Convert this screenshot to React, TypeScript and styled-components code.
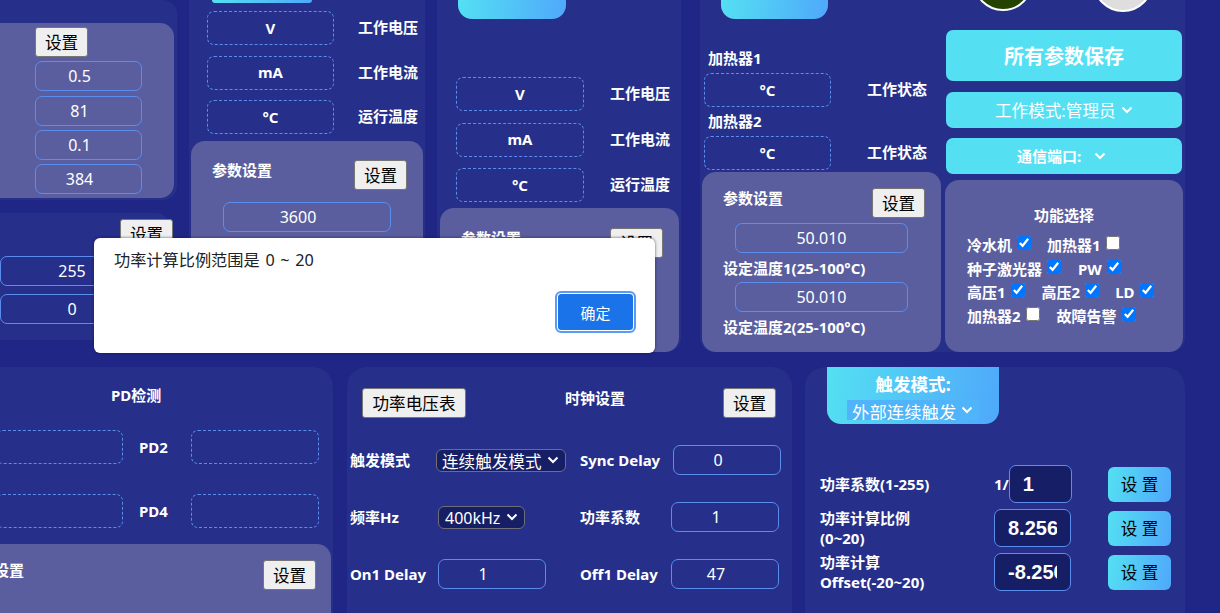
import React from 'react';
import styled, { createGlobalStyle, css } from 'styled-components';

const colors = {
  page: '#1f2685',
  panel: '#262f89',
  card: '#5a5e9e',
  line: '#5b8def',
  cyan: '#54e0f2',
  field: '#161e66',
};

const gradient = 'linear-gradient(100deg, #54e0f2 0%, #4fa8fb 100%)';

const chevron =
  "url(\"data:image/svg+xml,%3Csvg xmlns='http://www.w3.org/2000/svg' width='12' height='8' viewBox='0 0 12 8'%3E%3Cpath d='M1.5 1.5 6 6l4.5-4.5' fill='none' stroke='white' stroke-width='2'/%3E%3C/svg%3E\")";

const selectBase = css`
  appearance: none;
  color: #fff;
  outline: none;
  background-image: ${chevron};
  background-repeat: no-repeat;
  background-position: right 6px center;
`;

const GlobalStyle = createGlobalStyle`
  html, body {
    margin: 0;
    background: ${colors.page};
    overflow: hidden;
  }
  * {
    box-sizing: border-box;
  }
  body, button, input, select {
    font-family: "Noto Sans", "Noto Sans CJK SC", sans-serif;
  }
`;

const Page = styled.div`
  width: 1220px;
  height: 613px;
  overflow: hidden;
  position: relative;
  color: #fff;
`;

const TopRow = styled.div`
  display: grid;
  grid-template-columns: 177px 236px 244px 492px;
  column-gap: 12px;
  height: 352px;
`;

const BottomRow = styled.div`
  display: grid;
  grid-template-columns: 333px 445px 379px;
  column-gap: 14px;
  margin-top: 15px;
  height: 270px;
`;

const Stack = styled.div`
  display: flex;
  flex-direction: column;
`;

const Panel = styled.section<{ $ml?: number }>`
  display: flex;
  flex-direction: column;
  background: ${colors.panel};
  border-radius: 20px;
  margin-left: ${(p) => p.$ml ?? 0}px;
  min-width: 0;
`;

const TopPanel = styled(Panel)`
  border-radius: 0 0 14px 14px;
`;

const EdgePanel = styled(Panel)`
  border-radius: 0 20px 0 0;
`;

const SidePanel = styled.section`
  background: ${colors.panel};
  height: 200px;
  border-radius: 0 14px 14px 0;
  padding: 23px 3px 0 0;
`;

const LowerSidePanel = styled.section`
  display: flex;
  flex-direction: column;
  align-items: flex-start;
  gap: 7px;
  width: 170px;
  height: 127px;
  margin-top: 13px;
  padding-top: 6px;
  background: ${colors.panel};
  border-radius: 0 14px 14px 0;
`;

const SideCard = styled.div`
  display: flex;
  flex-direction: column;
  align-items: flex-start;
  gap: 4.3px;
  height: 175px;
  padding: 4px 0 0 35px;
  background: ${colors.card};
  border-radius: 0 14px 14px 0;
`;

const Card = styled.div<{ $mt?: number; $h: number; $ml?: number }>`
  height: ${(p) => p.$h}px;
  margin: ${(p) => p.$mt ?? 0}px 2px 0 ${(p) => p.$ml ?? 2}px;
  background: ${colors.card};
  border-radius: 14px;
`;

const CardHead = styled.div<{ $pt: number }>`
  display: flex;
  justify-content: space-between;
  align-items: flex-start;
  padding: ${(p) => p.$pt}px 16px 0 21px;
`;

const Label = styled.span`
  font-size: 15px;
  font-weight: 700;
  line-height: 21px;
  white-space: nowrap;
`;

const CutLabel = styled(Label)`
  margin-left: -57px;
`;

const SetButton = styled.button<{ $ml?: number }>`
  width: 53px;
  height: 30px;
  padding: 0;
  flex: none;
  font-size: 16.6px;
  color: #000;
  background: #efefef;
  border: 1px solid #767676;
  border-radius: 3px;
  margin-left: ${(p) => p.$ml ?? 0}px;
`;

const WideButton = styled(SetButton)`
  width: 104px;
`;

// most fields in the source keep their text left of centre
const ValueInput = styled.input<{ $w: number; $ml?: number; $mt?: number; $centered?: boolean }>`
  display: block;
  flex: none;
  width: ${(p) => p.$w}px;
  height: 30px;
  margin: ${(p) => p.$mt ?? 0}px 0 0 ${(p) => p.$ml ?? 0}px;
  padding: 0 ${(p) => (p.$centered ? 0 : 18)}px 0 0;
  font-size: 16px;
  text-align: center;
  color: #fff;
  background: transparent;
  border: 1px solid ${colors.line};
  border-radius: 7px;
  outline: none;
`;

const Tab = styled.div<{ $w: number; $h: number; $ml: number }>`
  flex: none;
  width: ${(p) => p.$w}px;
  height: ${(p) => p.$h}px;
  margin-left: ${(p) => p.$ml}px;
  background: ${gradient};
  border-radius: 0 0 14px 14px;
`;

const ReadoutList = styled.div<{ $mt: number; $gap: number; $pl: number }>`
  display: flex;
  flex-direction: column;
  gap: ${(p) => p.$gap}px;
  margin-top: ${(p) => p.$mt}px;
  padding-left: ${(p) => p.$pl}px;
`;

const Readout = styled.div<{ $gap: number }>`
  display: flex;
  align-items: center;
  gap: ${(p) => p.$gap}px;
`;

const ReadoutName = styled(Label)`
  margin-bottom: 1px;
`;

const DashBox = styled.div<{ $w?: number }>`
  display: flex;
  align-items: center;
  justify-content: center;
  flex: none;
  width: ${(p) => p.$w ?? 127}px;
  height: 34px;
  padding-bottom: 1px;
  font-size: 15px;
  font-weight: 700;
  border: 1px dashed ${colors.line};
  border-radius: 7px;
`;

const HeaterColumn = styled.div`
  display: flex;
  flex-direction: column;
  width: 243px;
`;

const HeaterLabel = styled(Label)<{ $mt: number }>`
  display: block;
  margin: ${(p) => p.$mt}px 0 4px 8px;
`;

const HeaterRow = styled.div`
  display: flex;
  align-items: center;
  gap: 36px;
  padding-left: 4px;
`;

const StackedLabel = styled(Label)<{ $mt: number }>`
  display: block;
  margin: ${(p) => p.$mt}px 0 0 21px;
`;

const PanelSplit = styled.div`
  display: grid;
  grid-template-columns: 245px 238px;
  height: 100%;
`;

const ControlColumn = styled.div`
  display: flex;
  flex-direction: column;
`;

const LedRow = styled.div`
  display: flex;
  align-items: flex-end;
  gap: 60px;
  height: 12px;
  padding-left: 28px;
`;

const Led = styled.div<{ $on?: boolean }>`
  flex: none;
  width: 60px;
  height: 60px;
  margin-bottom: ${(p) => (p.$on ? 1 : 0)}px;
  background: ${(p) => (p.$on ? '#244200' : '#dedede')};
  border: 2px solid #fff;
  border-radius: 50%;
`;

const SaveButton = styled.button`
  height: 51px;
  margin: 18px 1px 0;
  padding: 0;
  font-size: 20px;
  font-weight: 700;
  color: #fff;
  background: ${colors.cyan};
  border: none;
  border-radius: 7px;
`;

const DropBar = styled.div<{ $mt: number; $pl: number }>`
  display: flex;
  align-items: center;
  height: 36px;
  margin: ${(p) => p.$mt}px 1px 0;
  padding-left: ${(p) => p.$pl}px;
  background: ${colors.cyan};
  border-radius: 7px;
`;

const BareSelect = styled.select<{ $w: number }>`
  ${selectBase}
  flex: none;
  width: ${(p) => p.$w}px;
  height: 24px;
  padding: 0;
  font-size: 16.6px;
  background-color: transparent;
  background-position: right 0 center;
  border: none;
`;

const FunctionCard = styled.div`
  height: 172px;
  margin-top: 6px;
  padding: 25px 0 0 22px;
  background: ${colors.card};
  border-radius: 14px;
`;

const FunctionTitle = styled(Label)`
  display: block;
  margin: 0 0 8px 67px;
`;

const FunctionRow = styled.div`
  display: flex;
  height: 23.6px;
`;

const FunctionItem = styled.label<{ $ml?: number }>`
  display: flex;
  margin-left: ${(p) => p.$ml ?? 0}px;
  font-size: 15px;
  font-weight: 700;
  line-height: 23px;
`;

const Check = styled.input.attrs({ type: 'checkbox' })`
  width: 14px;
  height: 14px;
  margin: 2px 0 0 5px;
`;

const DetectPanelHead = styled(Label)`
  display: block;
  margin: 18px 0 0 111px;
`;

const DetectRow = styled.div<{ $mt: number }>`
  display: flex;
  align-items: center;
  justify-content: flex-end;
  margin-top: ${(p) => p.$mt}px;
  padding-right: 14px;
`;

const DetectName = styled(Label)`
  flex: none;
  width: 52px;
  margin-left: 16px;
`;

const BottomCard = styled(CardHead)`
  flex: 1;
  margin: 16px 2px 0 0;
  background: ${colors.card};
  border-radius: 0 14px 0 0;
  padding-right: 15px;
`;

const ClockHead = styled.div`
  display: flex;
  align-items: flex-start;
  padding: 21px 16px 0 15px;
`;

const ClockTitle = styled(Label)`
  margin-left: 99px;
  flex: 1;
`;

const ClockGrid = styled.div`
  display: grid;
  grid-template-columns: 88px 142px 91px 108px;
  grid-auto-rows: 30px;
  row-gap: 27px;
  align-items: center;
  margin-top: 27px;
  padding-left: 3px;
`;

const DarkSelect = styled.select<{ $w: number; $ml?: number; $pl: number; $size?: number }>`
  ${selectBase}
  width: ${(p) => p.$w}px;
  height: 23px;
  margin-left: ${(p) => p.$ml ?? 0}px;
  padding: 0 0 0 ${(p) => p.$pl}px;
  font-size: ${(p) => p.$size ?? 16}px;
  background-color: ${colors.field};
  border: 1px solid #6e6e78;
  border-radius: 6px;
`;

const TriggerTab = styled(Tab)`
  display: flex;
  flex-direction: column;
  align-items: center;
`;

const TriggerTitle = styled.div`
  margin-top: 5px;
  font-size: 17.6px;
  font-weight: 700;
  line-height: 25px;
`;

const TriggerSelect = styled(BareSelect)`
  height: 20px;
  margin-top: 3px;
  padding-left: 5px;
  font-size: 17.4px;
  background-color: #4fb4fa;
  background-position: right 6px center;
`;

const PowerGrid = styled.div`
  display: grid;
  grid-template-columns: 174px 78px 63px;
  grid-auto-rows: 38px;
  row-gap: 6px;
  align-items: center;
  margin-top: 41px;
  padding-left: 15px;
`;

const PowerLabel = styled.div`
  font-size: 15px;
  font-weight: 700;
  line-height: 20.5px;
  white-space: nowrap;
`;

const PowerField = styled.div`
  display: flex;
  align-items: center;
  font-size: 15px;
  font-weight: 700;
`;

const PowerInput = styled.input<{ $w: number }>`
  width: ${(p) => p.$w}px;
  height: 38px;
  padding: 0 13px;
  font-family: "Liberation Sans", sans-serif;
  font-size: 20px;
  font-weight: 700;
  color: #fff;
  background: ${colors.field};
  border: 1px solid ${colors.line};
  border-radius: 7px;
  outline: none;
`;

const GradientButton = styled.button`
  width: 63px;
  height: 35px;
  margin-left: 36px;
  padding: 0;
  font-size: 16.6px;
  color: #000;
  background: ${gradient};
  border: none;
  border-radius: 6px;
  white-space: pre;
`;

const Alert = styled.div`
  position: absolute;
  left: 94px;
  top: 238px;
  width: 561px;
  height: 115px;
  padding: 10px 21px 0 20px;
  color: #202124;
  background: #fff;
  border-radius: 6px;
  box-shadow: 0 0 3px rgba(20, 20, 60, 0.7);
`;

const AlertText = styled.div`
  font-size: 16.2px;
  line-height: 24px;
  word-spacing: 1.5px;
`;

const AlertFooter = styled.div`
  display: flex;
  justify-content: flex-end;
  margin-top: 21px;
`;

const ConfirmButton = styled.button`
  width: 77px;
  height: 38px;
  padding: 0;
  font-size: 15px;
  color: #fff;
  background: #1a73e8;
  border: 1px solid #fff;
  border-radius: 4px;
  outline: 2px solid #5b9bf5;
`;

const Readouts = ({ boxWidth, gap, items }: { boxWidth: number; gap: number; items: [string, string][] }) => (
  <>
    {items.map(([unit, name]) => (
      <Readout key={name} $gap={gap}>
        <DashBox $w={boxWidth}>{unit}</DashBox>
        <ReadoutName>{name}</ReadoutName>
      </Readout>
    ))}
  </>
);

const runItems: [string, string][] = [
  ['V', '工作电压'],
  ['mA', '工作电流'],
  ['°C', '运行温度'],
];

const Fn = ({ name, on, ml }: { name: string; on?: boolean; ml?: number }) => (
  <FunctionItem $ml={ml}>
    {name}
    <Check defaultChecked={on} />
  </FunctionItem>
);

export default function App() {
  return (
    <Page>
      <GlobalStyle />
      <TopRow>
        <Stack>
          <SidePanel>
            <SideCard>
              <SetButton>设置</SetButton>
              <ValueInput $w={107} defaultValue="0.5" />
              <ValueInput $w={107} defaultValue="81" />
              <ValueInput $w={107} defaultValue="0.1" />
              <ValueInput $w={107} defaultValue="384" />
            </SideCard>
          </SidePanel>
          <LowerSidePanel>
            <SetButton $ml={120}>设置</SetButton>
            <ValueInput $w={162} defaultValue="255" />
            <ValueInput $w={162} $mt={1} defaultValue="0" />
          </LowerSidePanel>
        </Stack>

        <TopPanel>
          <Tab $w={100} $h={3} $ml={23} />
          <ReadoutList $mt={8} $gap={10.5} $pl={18}>
            <Readouts boxWidth={127} gap={24} items={runItems} />
          </ReadoutList>
          <Card $mt={7} $h={211}>
            <CardHead $pt={19}>
              <Label>参数设置</Label>
              <SetButton>设置</SetButton>
            </CardHead>
            <ValueInput $w={168} $ml={32} $mt={12} defaultValue="3600" />
          </Card>
        </TopPanel>

        <TopPanel>
          <Tab $w={108} $h={19} $ml={21} />
          <ReadoutList $mt={58} $gap={11.5} $pl={19}>
            <Readouts boxWidth={128} gap={26} items={runItems} />
          </ReadoutList>
          <Card $mt={6} $h={144} $ml={3}>
            <CardHead $pt={20}>
              <Label>参数设置</Label>
              <SetButton>设置</SetButton>
            </CardHead>
          </Card>
        </TopPanel>

        <TopPanel $ml={7}>
          <PanelSplit>
            <HeaterColumn>
              <Tab $w={107} $h={19} $ml={21} />
              <HeaterLabel $mt={29}>加热器1</HeaterLabel>
              <HeaterRow>
                <DashBox>°C</DashBox>
                <ReadoutName>工作状态</ReadoutName>
              </HeaterRow>
              <HeaterLabel $mt={4}>加热器2</HeaterLabel>
              <HeaterRow>
                <DashBox>°C</DashBox>
                <ReadoutName>工作状态</ReadoutName>
              </HeaterRow>
              <Card $mt={2} $h={180}>
                <CardHead $pt={16}>
                  <Label>参数设置</Label>
                  <SetButton>设置</SetButton>
                </CardHead>
                <ValueInput $w={173} $ml={33} $mt={5} $centered defaultValue="50.010" />
                <StackedLabel $mt={5}>设定温度1(25-100°C)</StackedLabel>
                <ValueInput $w={173} $ml={33} $mt={3} $centered defaultValue="50.010" />
                <StackedLabel $mt={5}>设定温度2(25-100°C)</StackedLabel>
              </Card>
            </HeaterColumn>

            <ControlColumn>
              <LedRow>
                <Led $on />
                <Led />
              </LedRow>
              <SaveButton>所有参数保存</SaveButton>
              <DropBar $mt={11} $pl={49}>
                <BareSelect $w={138}>
                  <option>工作模式:管理员</option>
                </BareSelect>
              </DropBar>
              <DropBar $mt={10} $pl={71}>
                <Label>通信端口:</Label>
                <BareSelect $w={25}>
                  <option></option>
                </BareSelect>
              </DropBar>
              <FunctionCard>
                <FunctionTitle>功能选择</FunctionTitle>
                <FunctionRow>
                  <Fn name="冷水机" on />
                  <Fn name="加热器1" ml={16} />
                </FunctionRow>
                <FunctionRow>
                  <Fn name="种子激光器" on />
                  <Fn name="PW" on ml={17} />
                </FunctionRow>
                <FunctionRow>
                  <Fn name="高压1" on />
                  <Fn name="高压2" on ml={17} />
                  <Fn name="LD" on ml={16} />
                </FunctionRow>
                <FunctionRow>
                  <Fn name="加热器2" />
                  <Fn name="故障告警" on ml={17} />
                </FunctionRow>
              </FunctionCard>
            </ControlColumn>
          </PanelSplit>
        </TopPanel>
      </TopRow>

      <BottomRow>
        <EdgePanel>
          <DetectPanelHead>PD检测</DetectPanelHead>
          <DetectRow $mt={24}>
            <DashBox />
            <DetectName>PD2</DetectName>
            <DashBox $w={128} />
          </DetectRow>
          <DetectRow $mt={30}>
            <DashBox />
            <DetectName>PD4</DetectName>
            <DashBox $w={128} />
          </DetectRow>
          <BottomCard $pt={16}>
            <CutLabel>参数设置</CutLabel>
            <SetButton>设置</SetButton>
          </BottomCard>
        </EdgePanel>

        <Panel>
          <ClockHead>
            <WideButton>功率电压表</WideButton>
            <ClockTitle>时钟设置</ClockTitle>
            <SetButton>设置</SetButton>
          </ClockHead>
          <ClockGrid>
            <Label>触发模式</Label>
            <DarkSelect $w={130} $ml={-2} $pl={5} $size={16.6}>
              <option>连续触发模式</option>
            </DarkSelect>
            <Label>Sync Delay</Label>
            <ValueInput $w={108} $ml={2} defaultValue="0" />
            <Label>频率Hz</Label>
            <DarkSelect $w={87} $pl={6}>
              <option>400kHz</option>
            </DarkSelect>
            <Label>功率系数</Label>
            <ValueInput $w={108} defaultValue="1" />
            <Label>On1 Delay</Label>
            <ValueInput $w={108} defaultValue="1" />
            <Label>Off1 Delay</Label>
            <ValueInput $w={108} defaultValue="47" />
          </ClockGrid>
        </Panel>

        <Panel $ml={-1}>
          <TriggerTab $w={172} $h={57} $ml={22}>
            <TriggerTitle>触发模式:</TriggerTitle>
            <TriggerSelect $w={132}>
              <option>外部连续触发</option>
            </TriggerSelect>
          </TriggerTab>
          <PowerGrid>
            <PowerLabel>功率系数(1-255)</PowerLabel>
            <PowerField>
              1/
              <PowerInput $w={63} defaultValue="1" />
            </PowerField>
            <GradientButton>设 置</GradientButton>
            <PowerLabel>
              功率计算比例
              <br />
              (0~20)
            </PowerLabel>
            <PowerInput $w={77} defaultValue="8.256" />
            <GradientButton>设 置</GradientButton>
            <PowerLabel>
              功率计算
              <br />
              Offset(-20~20)
            </PowerLabel>
            <PowerInput $w={77} defaultValue="-8.2560" />
            <GradientButton>设 置</GradientButton>
          </PowerGrid>
        </Panel>
      </BottomRow>

      <Alert>
        <AlertText>功率计算比例范围是 0 ~ 20</AlertText>
        <AlertFooter>
          <ConfirmButton>确定</ConfirmButton>
        </AlertFooter>
      </Alert>
    </Page>
  );
}
